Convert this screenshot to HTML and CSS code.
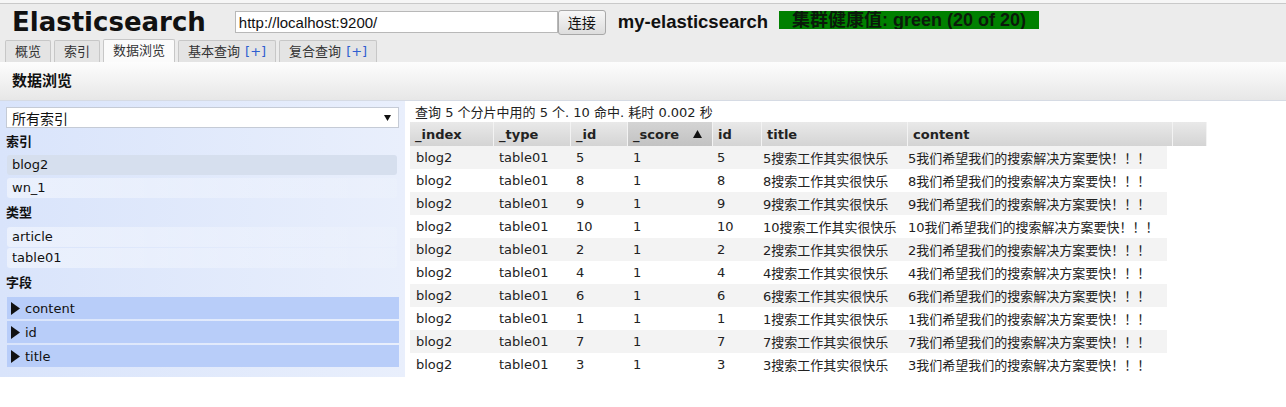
FILE: index.html
```html
<!DOCTYPE html>
<html lang="zh">
<head>
<meta charset="utf-8">
<title>Elasticsearch</title>
<link rel="stylesheet" href="styles.css">
</head>
<body>
<div class="top-strip"></div>
<header class="header">
  <div class="topbar">
    <h1 class="logo">Elasticsearch</h1>
    <input class="uri" type="text" value="http://localhost:9200/">
    <button class="connect">连接</button>
    <span class="cluster-name">my-elasticsearch</span>
    <span class="health">集群健康值: green (20 of 20)</span>
  </div>
  <nav class="tabs">
    <div class="tab">概览</div>
    <div class="tab">索引</div>
    <div class="tab active">数据浏览</div>
    <div class="tab">基本查询<span class="plus">[+]</span></div>
    <div class="tab">复合查询<span class="plus">[+]</span></div>
  </nav>
</header>
<div class="page-title">数据浏览</div>
<main class="browser">
  <aside class="sidebar">
    <div class="select">
      <span>所有索引</span>
      <svg class="select-arrow" width="7" height="6" viewBox="0 0 7 6"><path d="M0 0H7L3.5 6Z"/></svg>
    </div>
    <div class="group-title">索引</div>
    <div class="items">
      <div class="item selected">blog2</div>
      <div class="item">wn_1</div>
    </div>
    <div class="group-title">类型</div>
    <div class="items tight">
      <div class="item">article</div>
      <div class="item">table01</div>
    </div>
    <div class="group-title">字段</div>
    <div class="fields">
      <div class="field"><svg width="9" height="13" viewBox="0 0 9 13"><path d="M0 0L9 6.5L0 13Z"/></svg><span>content</span></div>
      <div class="field"><svg width="9" height="13" viewBox="0 0 9 13"><path d="M0 0L9 6.5L0 13Z"/></svg><span>id</span></div>
      <div class="field"><svg width="9" height="13" viewBox="0 0 9 13"><path d="M0 0L9 6.5L0 13Z"/></svg><span>title</span></div>
    </div>
  </aside>
  <section class="results">
    <div class="summary">查询 5 个分片中用的 5 个. 10 命中. 耗时 0.002 秒</div>
    <div class="thead">
      <div class="th">_index</div>
      <div class="th">_type</div>
      <div class="th">_id</div>
      <div class="th sorted">_score<svg class="sort-arrow" width="9" height="8" viewBox="0 0 9 8"><path d="M4.5 0L9 8H0Z"/></svg></div>
      <div class="th">id</div>
      <div class="th">title</div>
      <div class="th">content</div>
      <div class="th"></div>
    </div>
    <div class="tbody">
      <div class="tr"><span>blog2</span><span>table01</span><span>5</span><span>1</span><span>5</span><span>5搜索工作其实很快乐</span><span>5我们希望我们的搜索解决方案要快！！！</span></div>
      <div class="tr"><span>blog2</span><span>table01</span><span>8</span><span>1</span><span>8</span><span>8搜索工作其实很快乐</span><span>8我们希望我们的搜索解决方案要快！！！</span></div>
      <div class="tr"><span>blog2</span><span>table01</span><span>9</span><span>1</span><span>9</span><span>9搜索工作其实很快乐</span><span>9我们希望我们的搜索解决方案要快！！！</span></div>
      <div class="tr"><span>blog2</span><span>table01</span><span>10</span><span>1</span><span>10</span><span>10搜索工作其实很快乐</span><span>10我们希望我们的搜索解决方案要快！！！</span></div>
      <div class="tr"><span>blog2</span><span>table01</span><span>2</span><span>1</span><span>2</span><span>2搜索工作其实很快乐</span><span>2我们希望我们的搜索解决方案要快！！！</span></div>
      <div class="tr"><span>blog2</span><span>table01</span><span>4</span><span>1</span><span>4</span><span>4搜索工作其实很快乐</span><span>4我们希望我们的搜索解决方案要快！！！</span></div>
      <div class="tr"><span>blog2</span><span>table01</span><span>6</span><span>1</span><span>6</span><span>6搜索工作其实很快乐</span><span>6我们希望我们的搜索解决方案要快！！！</span></div>
      <div class="tr"><span>blog2</span><span>table01</span><span>1</span><span>1</span><span>1</span><span>1搜索工作其实很快乐</span><span>1我们希望我们的搜索解决方案要快！！！</span></div>
      <div class="tr"><span>blog2</span><span>table01</span><span>7</span><span>1</span><span>7</span><span>7搜索工作其实很快乐</span><span>7我们希望我们的搜索解决方案要快！！！</span></div>
      <div class="tr"><span>blog2</span><span>table01</span><span>3</span><span>1</span><span>3</span><span>3搜索工作其实很快乐</span><span>3我们希望我们的搜索解决方案要快！！！</span></div>
    </div>
  </section>
</main>
</body>
</html>
```
FILE: styles.css
```css
body {
  margin: 0;
  font-family: "DejaVu Sans", "Noto Sans CJK SC", sans-serif;
  font-size: 13px;
  color: #222;
  background: #fff;
}

.top-strip {
  height: 3px;
  background: #f6f6f6;
}

.header {
  background: #ececec;
  border-top: 1px solid #c9c9c9;
}

.topbar {
  display: flex;
  align-items: center;
  height: 36px;
  padding-left: 12px;
}

.logo {
  margin: 0;
  font: bold 26px/30px "DejaVu Sans", sans-serif;
  color: #111;
}

.uri {
  margin: 0 0 0 29px;
  width: 323px;
  height: 22px;
  box-sizing: border-box;
  border: 1px solid #b8b8b8;
  padding: 0 3px;
  background: #fff;
  font: 15px "Liberation Sans", sans-serif;
  color: #111;
  outline: none;
}

.connect {
  margin: 0;
  width: 48px;
  height: 25px;
  box-sizing: border-box;
  border: 1px solid #a8a8a8;
  border-radius: 3px;
  background: linear-gradient(#f7f7f7, #dddddd);
  font: 14px "Noto Sans CJK SC", sans-serif;
  color: #111;
  padding: 0;
}

.cluster-name {
  margin-left: 12px;
  font: bold 18.5px "Liberation Sans", "Noto Sans CJK SC", sans-serif;
  color: #111;
}

.health {
  margin: -4px 0 0 11px;
  width: 260px;
  height: 18px;
  background: #008000;
  font: bold 18px/18px "Liberation Sans", "Noto Sans CJK SC", sans-serif;
  color: #0a1a0a;
  text-align: center;
  white-space: nowrap;
  overflow: hidden;
}

.tabs {
  display: flex;
  align-items: flex-end;
  gap: 3px;
  height: 22px;
  padding-left: 5px;
}

.tab {
  height: 21px;
  line-height: 21px;
  padding: 0 9px;
  border: 1px solid #c7c7c7;
  border-bottom: none;
  border-radius: 2px 2px 0 0;
  background: #e4e4e4;
  color: #333;
  white-space: nowrap;
}

.tab.active {
  background: #fbfbfb;
  height: 22px;
}

.plus {
  margin-left: 5px;
  color: #2f5fd0;
}

.page-title {
  height: 38px;
  line-height: 38px;
  padding-left: 12px;
  background: linear-gradient(#fdfdfd, #e7e7e7);
  border-bottom: 1px solid #d6dbe4;
  font-size: 15px;
  font-weight: bold;
  color: #111;
}

.browser {
  display: flex;
  align-items: flex-start;
}

.sidebar {
  width: 405px;
  box-sizing: border-box;
  padding: 6px 6px 10px 6px;
  background: linear-gradient(to right, #d9e4fb, #e9effc);
}

.select {
  display: flex;
  align-items: center;
  justify-content: space-between;
  height: 21px;
  box-sizing: border-box;
  border: 1px solid #c5cbd6;
  background: #fff;
  padding: 0 7px 0 5px;
  font-size: 14px;
  color: #111;
}

.select-arrow path { fill: #111; }

.group-title {
  margin-top: 4px;
  height: 20px;
  line-height: 20px;
  font-size: 13px;
  font-weight: bold;
  color: #111;
}

.items {
  display: flex;
  flex-direction: column;
  gap: 3px;
  margin: 3px 0 5px 1px;
  width: 390px;
}

.items.tight {
  gap: 1px;
  margin-top: 4px;
}

.item {
  height: 20px;
  line-height: 20px;
  padding-left: 5px;
  border-radius: 3px;
  background: linear-gradient(to right, rgba(255,255,255,0.45), rgba(255,255,255,0.1));
  color: #111;
}

.item.selected {
  background: #d6dfee;
}

.fields {
  display: flex;
  flex-direction: column;
  gap: 2px;
  margin: 4px 0 0 1px;
  width: 392px;
}

.field {
  display: flex;
  align-items: center;
  gap: 5px;
  height: 22px;
  padding-left: 4px;
  background: #b8cdf9;
  color: #111;
}

.field svg path { fill: #111; }

.results {
  padding-left: 5px;
}

.summary {
  padding: 3px 0 0 5px;
  height: 18px;
  line-height: 18px;
  color: #222;
}

.thead {
  display: grid;
  grid-template-columns: 84px 77px 57px 85px 49px 146px 265px 34px;
  height: 24px;
}

.th {
  display: flex;
  align-items: center;
  padding-left: 5px;
  background: linear-gradient(#e9e9e9, #d4d4d4);
  border-right: 1px solid #f3f3f3;
  font-weight: bold;
  color: #222;
}

.th.sorted {
  background: linear-gradient(#d4d4d4, #c2c2c2);
}

.sort-arrow {
  margin-left: 14px;
}

.sort-arrow path { fill: #111; }

.tbody {
  width: 757px;
}

.tr {
  display: grid;
  grid-template-columns: 84px 77px 57px 84px 46px 145px 264px;
  height: 23px;
  align-items: center;
  white-space: nowrap;
}

.tr:nth-child(odd) {
  background: #f3f3f3;
}

.tr span {
  padding-left: 5px;
}

.tr span:first-child {
  padding-left: 6px;
}
```
